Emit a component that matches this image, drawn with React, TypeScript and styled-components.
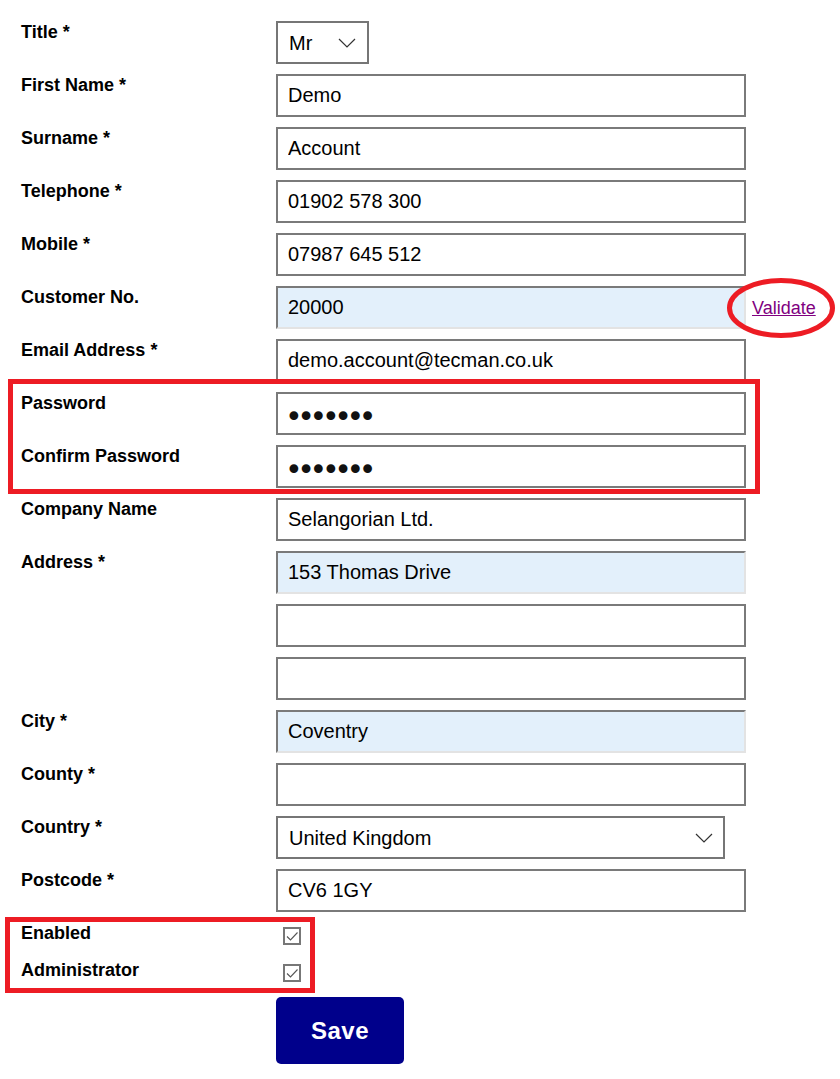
import React from "react";
import styled, { createGlobalStyle, css } from "styled-components";

const GlobalStyle = createGlobalStyle`
  html, body { margin: 0; padding: 0; background: #fff; }
  body { font-family: "Liberation Sans", Arial, sans-serif; color: #000; }
  *, *::before, *::after { box-sizing: border-box; }
`;

const Form = styled.form`
  display: flex;
  flex-direction: column;
  gap: 10px;
  padding: 21px 0 0 21px;
`;

const Row = styled.div<{ $h?: number }>`
  display: grid;
  grid-template-columns: 255px auto;
  align-items: start;
  height: ${(p) => p.$h ?? 43}px;
`;

const Label = styled.label`
  font-weight: 700;
  font-size: 18px;
  line-height: 22px;
  padding-top: 0;
  white-space: nowrap;
`;

const Control = styled.div`
  display: flex;
  align-items: center;
  gap: 6px;
  height: 100%;
`;

const TextInput = styled.input<{ $filled?: boolean; $secret?: boolean }>`
  width: 470px;
  height: 43px;
  margin: 0;
  padding: 0 10px;
  font-family: "Liberation Sans", Arial, sans-serif;
  font-size: 20px;
  color: #000;
  border: 2px solid #7a7a7a;
  background: #fff;
  outline: none;
  ${(p) =>
    p.$filled &&
    css`
      background: #e3f0fb;
      border-color: #7a7a7a #e3e3e3 #e3e3e3 #7a7a7a;
    `}
  ${(p) =>
    p.$secret &&
    css`
      font-family: "DejaVu Sans", sans-serif;
      font-size: 30px;
      letter-spacing: -5.4px;
      padding: 5px 7px 0 7px;
      color: #111;
    `}
`;

const SelectWrap = styled.div<{ $w: number }>`
  position: relative;
  width: ${(p) => p.$w}px;
  height: 43px;
`;

const Select = styled.select`
  appearance: none;
  -webkit-appearance: none;
  width: 100%;
  height: 43px;
  margin: 0;
  padding: 0 11px;
  font-family: "Liberation Sans", Arial, sans-serif;
  font-size: 20px;
  color: #000;
  background: #fff;
  border: 2px solid #767676;
  border-radius: 0;
  outline: none;
`;

const Chevron = styled.svg<{ $right: number }>`
  position: absolute;
  right: ${(p) => p.$right}px;
  top: 50%;
  transform: translateY(-50%);
  pointer-events: none;
`;

const LinkWrap = styled.span`
  position: relative;
  display: inline-block;
  margin-top: 2px;
`;

const ValidateLink = styled.a`
  font-size: 18px;
  line-height: 21px;
  color: #800080;
  text-decoration: underline;
  cursor: pointer;
`;

const Ellipse = styled.svg`
  position: absolute;
  left: calc(50% - 3px);
  top: calc(50% - 1px);
  transform: translate(-50%, -50%);
  pointer-events: none;
  overflow: visible;
`;

const Highlight = styled.div<{ $top: number; $left: number; $w: number; $h: number }>`
  position: relative;
  display: flex;
  flex-direction: column;
  gap: 10px;
  &::after {
    content: "";
    position: absolute;
    top: ${(p) => p.$top}px;
    left: ${(p) => p.$left}px;
    width: ${(p) => p.$w}px;
    height: ${(p) => p.$h}px;
    border: 5px solid #ed1c24;
    pointer-events: none;
  }
`;

const CheckBox = styled.span`
  display: inline-flex;
  align-items: center;
  justify-content: center;
  width: 18px;
  height: 18px;
  margin: 5px 0 0 7px;
  border: 2px solid #777;
  background: #fff;
`;

const SaveButton = styled.button`
  width: 128px;
  height: 67px;
  margin: 1px 0 0 0;
  padding: 0;
  background: #00008b;
  color: #fff;
  border: none;
  border-radius: 5px;
  font-family: "Liberation Sans", Arial, sans-serif;
  font-weight: 700;
  font-size: 24px;
  letter-spacing: 0.5px;
  cursor: pointer;
`;

const ChevronIcon = ({ right }: { right: number }) => (
  <Chevron $right={right} width="18" height="10" viewBox="0 0 18 10">
    <polyline points="1,1 9,9 17,1" fill="none" stroke="#333" strokeWidth="1.2" />
  </Chevron>
);

const Check = () => (
  <CheckBox>
    <svg width="14" height="14" viewBox="0 0 14 14">
      <polyline points="2,7.5 5.5,11 12.5,3.5" fill="none" stroke="#555" strokeWidth="1.1" />
    </svg>
  </CheckBox>
);

type FieldProps = { label: string; value?: string; filled?: boolean; secret?: boolean };

const Field = ({ label, value = "", filled, secret }: FieldProps) => (
  <Row>
    <Label>{label}</Label>
    <Control>
      <TextInput
        type={secret ? "password" : "text"}
        defaultValue={value}
        $filled={filled}
        $secret={secret}
        readOnly
      />
    </Control>
  </Row>
);

export default function App() {
  return (
    <>
      <GlobalStyle />
      <Form onSubmit={(e) => e.preventDefault()}>
        <Row>
          <Label>Title *</Label>
          <Control>
            <SelectWrap $w={93}>
              <Select defaultValue="Mr">
                <option>Mr</option>
                <option>Mrs</option>
                <option>Ms</option>
              </Select>
              <ChevronIcon right={13} />
            </SelectWrap>
          </Control>
        </Row>
        <Field label="First Name *" value="Demo" />
        <Field label="Surname *" value="Account" />
        <Field label="Telephone *" value="01902 578 300" />
        <Field label="Mobile *" value="07987 645 512" />
        <Row>
          <Label>Customer No.</Label>
          <Control>
            <TextInput type="text" defaultValue="20000" $filled readOnly />
            <LinkWrap>
              <ValidateLink>Validate</ValidateLink>
              <Ellipse width="108" height="60" viewBox="0 0 108 60">
                <ellipse cx="54" cy="30" rx="51.5" ry="27.5" fill="none" stroke="#ed1c24" strokeWidth="5" />
              </Ellipse>
            </LinkWrap>
          </Control>
        </Row>
        <Field label="Email Address *" value="demo.account@tecman.co.uk" />
        <Highlight $top={-13} $left={-13} $w={752} $h={115}>
          <Field label="Password" value="1234567" secret />
          <Field label="Confirm Password" value="1234567" secret />
        </Highlight>
        <Field label="Company Name" value="Selangorian Ltd." />
        <Field label="Address *" value="153 Thomas Drive" filled />
        <Field label="" />
        <Field label="" />
        <Field label="City *" value="Coventry" filled />
        <Field label="County *" />
        <Row>
          <Label>Country *</Label>
          <Control>
            <SelectWrap $w={449}>
              <Select defaultValue="United Kingdom">
                <option>United Kingdom</option>
                <option>Ireland</option>
              </Select>
              <ChevronIcon right={12} />
            </SelectWrap>
          </Control>
        </Row>
        <Field label="Postcode *" value="CV6 1GY" />
        <Highlight $top={-5} $left={-16} $w={310} $h={76}>
          <Row $h={27}>
            <Label>Enabled</Label>
            <div>
              <Check />
            </div>
          </Row>
          <Row $h={27}>
            <Label>Administrator</Label>
            <div>
              <Check />
            </div>
          </Row>
        </Highlight>
        <Row $h={68}>
          <span />
          <div>
            <SaveButton type="submit">Save</SaveButton>
          </div>
        </Row>
      </Form>
    </>
  );
}
